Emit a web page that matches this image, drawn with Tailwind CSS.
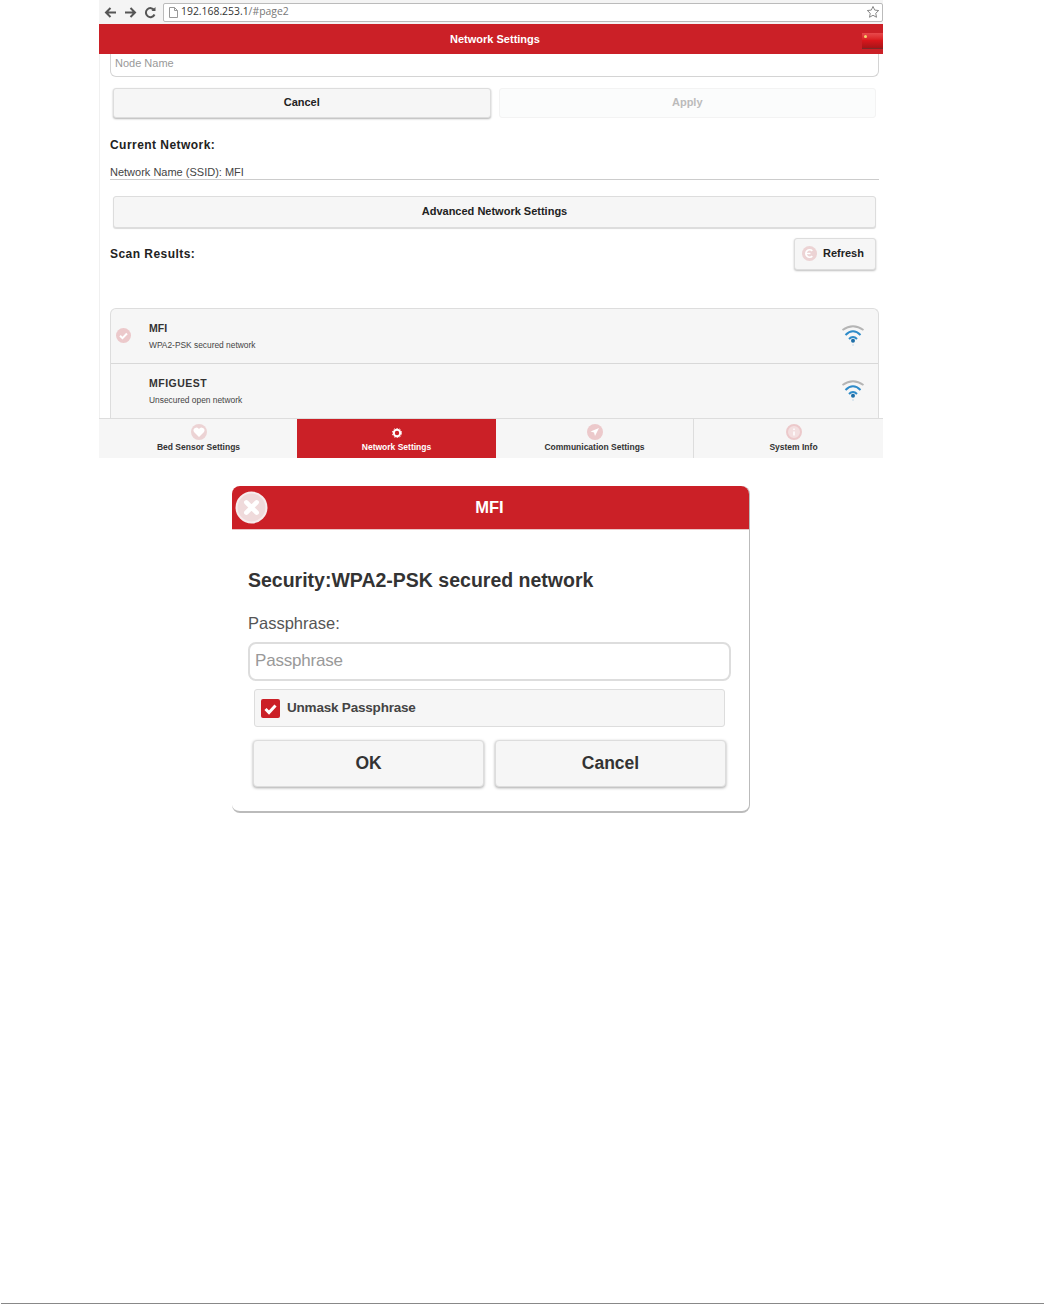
<!DOCTYPE html>
<html lang="en">
<head>
  <meta charset="UTF-8" />
  <title>Network Settings</title>
  <script src="https://cdn.jsdelivr.net/npm/@tailwindcss/browser@4"></script>
</head>
<body class="bg-white font-['Liberation_Sans',Arial,sans-serif] text-[#333]">
<div class="flex flex-col h-[1304px] overflow-hidden">

  <!-- Browser screenshot -->
  <div class="ml-[99px] w-[784px] h-[458px] flex flex-col">
    <!-- Address bar -->
    <div class="h-6 flex items-center bg-[#f4f4f4] pl-[5px] gap-[6px]">
      <svg class="w-[13px] h-[13px]" viewBox="0 0 13 13" fill="none" stroke="#555" stroke-width="2"><path d="M12 6.5H2M6.5 2 2 6.5 6.5 11"/></svg>
      <svg class="w-[13px] h-[13px] ml-[1px]" viewBox="0 0 13 13" fill="none" stroke="#555" stroke-width="2"><path d="M1 6.5h10M6.5 2 11 6.5 6.5 11"/></svg>
      <svg class="w-[13px] h-[13px] ml-[1px]" viewBox="0 0 13 13" fill="none" stroke="#555" stroke-width="2"><path d="M10.5 8.5a4.5 4.5 0 1 1-.3-4.3"/><path d="M11.500 1v4h-4" fill="#555" stroke="none"/></svg>
      <div class="flex-1 h-[19px] bg-white border border-[#bbb] rounded-[2px] flex items-center pl-[5px] pr-[2px]">
        <svg class="w-[9px] h-[11px]" viewBox="0 0 9 11" fill="none" stroke="#999"><path d="M.5.5h5l3 3v7h-8zM5.500.5v3h3"/></svg>
        <span class="ml-[3px] text-[10.4px] font-['Open_Sans',sans-serif] text-[#333]">192.168.253.1<span class="text-[#777]">/#page2</span></span>
        <svg class="w-[14px] h-[14px] ml-auto" viewBox="0 0 24 24" fill="none" stroke="#777" stroke-width="1.5"><path d="m12 2.500 2.900 6.200 6.800.8-5 4.700 1.300 6.800-6-3.400-6 3.400 1.300-6.800-5-4.700 6.800-.8z"/></svg>
      </div>
    </div>

    <!-- Red header -->
    <div class="relative h-[30px] bg-[#cb2027] flex items-center justify-center pl-2 text-white text-[11px] font-bold">
      Network Settings
      <div class="absolute right-0 top-[9px] w-[21px] h-[16px] bg-gradient-to-b from-[#e8484c] via-[#d8161c] to-[#a81418] border-b border-[#7a2a2a]">
        <div class="absolute left-[2px] top-[2px] w-[3px] h-[3px] rounded-full bg-[#f5d76e]"></div>
      </div>
    </div>

    <!-- Page content -->
    <div class="flex-1 min-h-0 bg-white border-l border-[#f0f0f0] flex flex-col">
      <div class="shrink-0 ml-[10px] w-[769px] h-[23px] border border-t-0 border-[#d4d4d4] rounded-b-[6px] pl-[4px] text-[11px] text-[#999] leading-[18px]">Node Name</div>

      <div class="shrink-0 flex mt-[11px] ml-[13px] mr-[7px] gap-2">
        <button class="flex-1 h-[30px] pb-[2px] bg-[#f6f6f6] border border-[#ddd] rounded-[3px] shadow-[0_1px_2px_rgba(0,0,0,0.3)] text-[11px] font-bold text-[#222]">Cancel</button>
        <button class="flex-1 h-[30px] pb-[2px] bg-[#fbfcfc] border border-[#f3f3f3] rounded-[3px] text-[11px] font-bold text-[#bbb]">Apply</button>
      </div>

      <h2 class="shrink-0 mt-[19px] ml-[10px] text-[12px] leading-[16px] font-bold tracking-[0.45px] text-[#222]">Current Network:</h2>
      <p class="shrink-0 mt-[12px] ml-[10px] w-[769px] text-[11px] leading-[14px] text-[#444] border-b border-[#ccc]">Network Name (SSID): MFI</p>

      <button class="shrink-0 mt-[16px] ml-[13px] w-[763px] h-[32px] pb-[2px] bg-[#f6f6f6] border border-[#ddd] rounded-[3px] shadow-[0_1px_1px_rgba(0,0,0,0.15)] text-[11px] font-bold text-[#222]">Advanced Network Settings</button>

      <div class="shrink-0 flex items-center justify-between mt-[10px] ml-[10px] mr-[7px]">
        <h2 class="text-[12px] font-bold tracking-[0.45px] text-[#222]">Scan Results:</h2>
        <button class="w-[82px] h-[32px] bg-[#f6f6f6] border border-[#ddd] rounded-[3px] shadow-[0_1px_2px_rgba(0,0,0,0.25)] flex items-center pl-[7px] pb-[2px] gap-[6px] text-[11px] font-bold text-[#222]">
          <svg class="w-[15px] h-[15px] mt-[1px]" viewBox="0 0 16 16"><circle cx="8" cy="8" r="8" fill="#ecd3d4"/><path d="M11 5.200a4 4 0 1 0 0 5.600" fill="none" stroke="#fff" stroke-width="1.800"/><path d="M4 8h5" stroke="#fff" stroke-width="1.500"/></svg>
          Refresh
        </button>
      </div>

      <!-- Scan list -->
      <div class="mt-[38px] ml-[10px] w-[769px] flex-1 min-h-0 bg-[#f6f6f6] border border-[#ddd] border-b-0 rounded-t-[6px]">
        <div class="relative h-[55px] border-b border-[#d8d8d8] pl-[38px] pt-[13px]">
          <svg class="absolute left-[5px] top-[19px] w-[15px] h-[15px]" viewBox="0 0 16 16"><circle cx="8" cy="8" r="8" fill="#ecc9cb"/><path d="m4.300 8.200 2.600 2.600 4.800-5" fill="none" stroke="#fff" stroke-width="2.200"/></svg>
          <div class="text-[10.5px] leading-[13px] font-bold text-[#333]">MFI</div>
          <div class="mt-[5px] text-[8.4px] leading-[11px] text-[#444]">WPA2-PSK secured network</div>
          <svg class="absolute right-[13px] top-[15px] w-[24px] h-[22px]" viewBox="0 0 24 22" fill="none">
            <path d="M1.500 6Q12-1.500 22.500 6" stroke="#b5b5b5" stroke-width="1.800"/>
            <path d="M4.500 11Q12 3.500 19.500 11" stroke="#2e8bc9" stroke-width="2"/>
            <path d="M8 15q4-4 8 0" stroke="#2e8bc9" stroke-width="2"/>
            <circle cx="12" cy="16.800" r="2" fill="#1f6fa8"/>
            <path d="M12 20.500v1" stroke="#8fb8d4"/>
          </svg>
        </div>
        <div class="relative h-[55px] pl-[38px] pt-[13px]">
          <div class="text-[10.5px] leading-[13px] font-bold tracking-[0.5px] text-[#333]">MFIGUEST</div>
          <div class="mt-[5px] text-[8.4px] leading-[11px] text-[#444]">Unsecured open network</div>
          <svg class="absolute right-[13px] top-[15px] w-[24px] h-[22px]" viewBox="0 0 24 22" fill="none">
            <path d="M1.500 6Q12-1.500 22.500 6" stroke="#b5b5b5" stroke-width="1.800"/>
            <path d="M4.500 11Q12 3.500 19.500 11" stroke="#2e8bc9" stroke-width="2"/>
            <path d="M8 15q4-4 8 0" stroke="#2e8bc9" stroke-width="2"/>
            <circle cx="12" cy="16.800" r="2" fill="#1f6fa8"/>
            <path d="M12 20.500v1" stroke="#8fb8d4"/>
          </svg>
        </div>
      </div>
    </div>

    <!-- Bottom tabs -->
    <div class="h-[40px] flex border-t border-[#ddd] bg-[#f6f6f6] text-[8.5px] font-bold text-[#333]">
      <div class="w-[198px] flex flex-col items-center pt-[5px] pl-[1px]">
        <svg class="w-[16px] h-[16px]" viewBox="0 0 16 16"><circle cx="8" cy="8" r="8" fill="#ecd3d4"/><path d="M8 13 3 8a2.900 2.900 0 0 1 5-3 2.900 2.900 0 0 1 5 3z" fill="#fff"/></svg>
        <span class="mt-[1px]">Bed Sensor Settings</span>
      </div>
      <div class="w-[199px] flex flex-col items-center pt-[9px] bg-[#cb2027] text-white">
        <svg class="w-[10px] h-[10px]" viewBox="0 0 10 10"><circle cx="5" cy="5" r="3.200" fill="none" stroke="#fff" stroke-width="2"/><circle cx="5" cy="5" r="4.700" fill="none" stroke="#fff" stroke-dasharray="1.500 1.500"/></svg>
        <span class="mt-[3px]">Network Settings</span>
      </div>
      <div class="w-[198px] flex flex-col items-center pt-[5px] border-r border-[#ddd]">
        <svg class="w-[16px] h-[16px]" viewBox="0 0 16 16"><circle cx="8" cy="8" r="8" fill="#ecc9cb"/><path d="M12 4 3.500 7.500l3.500 1 1 3.500z" fill="#fff"/></svg>
        <span class="mt-[1px]">Communication Settings</span>
      </div>
      <div class="flex-1 flex flex-col items-center pt-[5px] pl-[10px]">
        <svg class="w-[16px] h-[16px]" viewBox="0 0 16 16"><circle cx="8" cy="8" r="7" fill="#f3dfe0" stroke="#ecc9cb" stroke-width="2"/><path d="M8 4.500v1.500M8 7.500v4" stroke="#fff" stroke-width="1.500"/></svg>
        <span class="mt-[1px]">System Info</span>
      </div>
    </div>
  </div>

  <!-- Passphrase dialog -->
  <div class="ml-[232px] mt-[28px] w-[518px] h-[327px] bg-white border-r border-b-2 border-[#bbb] rounded-[8px] flex flex-col">
    <div class="h-[44px] bg-[#cb2027] rounded-t-[8px] border-b border-[#e9c4c6] flex items-center justify-center pr-[2px] relative text-white text-[16.500px] font-bold">
      <svg class="absolute left-[3px] top-[5px] w-[33px] h-[33px]" viewBox="0 0 32 32"><circle cx="16" cy="16" r="14.500" fill="#efdadb" stroke="#f7eced" stroke-width="2"/><path d="m11 11 10 10M21 11 11 21" stroke="#fff" stroke-width="4.500" stroke-linecap="round"/></svg>
      MFI
    </div>
    <h1 class="mt-[38px] ml-[16px] text-[19.500px] leading-[24px] font-bold text-[#333]">Security:WPA2-PSK secured network</h1>
    <p class="mt-[21px] ml-[16px] text-[16.500px] leading-[20px] text-[#555]">Passphrase:</p>
    <div class="mt-[9px] ml-[16px] w-[483px] h-[39px] border-2 border-[#ddd] rounded-[8px] pl-[5px] pb-[2px] flex items-center text-[17px] tracking-[-0.2px] text-[#999]">Passphrase</div>
    <div class="mt-[8px] ml-[22px] w-[471px] h-[38px] bg-[#f6f6f6] border border-[#ddd] rounded-[3px] flex items-center pl-[6px] gap-[7px] text-[13.500px] tracking-[-0.2px] font-bold text-[#444]">
      <svg class="w-[19px] h-[19px]" viewBox="0 0 19 19"><rect width="19" height="19" rx="2" fill="#cb2027"/><path d="m4.500 10 3.500 3.500 6.500-7" fill="none" stroke="#fff" stroke-width="3"/></svg>
      Unmask Passphrase
    </div>
    <div class="mt-[13px] ml-[21px] flex gap-[11px]">
      <button class="w-[231px] h-[47px] bg-[#f6f6f6] border border-[#ddd] rounded-[4px] shadow-[0_1px_3px_rgba(0,0,0,0.35)] text-[17.500px] font-bold text-[#333]">OK</button>
      <button class="w-[231px] h-[47px] bg-[#f6f6f6] border border-[#ddd] rounded-[4px] shadow-[0_1px_3px_rgba(0,0,0,0.35)] text-[17.500px] font-bold text-[#333]">Cancel</button>
    </div>
  </div>

  <!-- Page footer rule -->
  <div class="mt-auto h-[1px] bg-[#888] ml-[1px]"></div>
</div>
</body>
</html>
